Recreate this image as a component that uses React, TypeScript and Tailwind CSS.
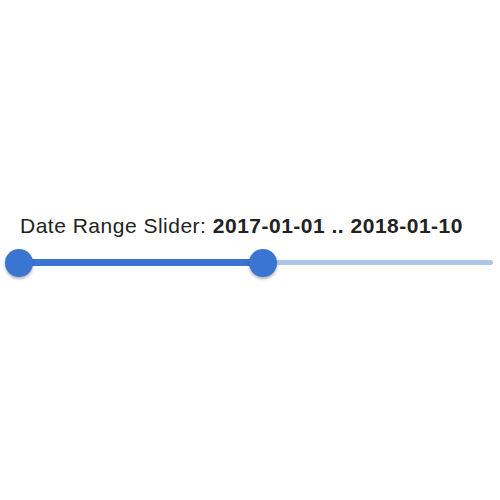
import React from "react";

const MIN = 0;
const MAX = 100;

const RangeSlider = ({ low, high }: { low: number; high: number }) => {
  const pct = (v: number) => ((v - MIN) / (MAX - MIN)) * 100;
  return (
    <div className="relative h-[28px] mx-[19px]">
      {/* rail */}
      <div className="absolute top-[11px] left-[-11px] right-[-12px] h-[5px] rounded-full bg-[#adc6ec]" />
      {/* selected range */}
      <div
        className="absolute top-[10px] h-[7px] bg-[#3a75d2]"
        style={{ left: `${pct(low)}%`, width: `${pct(high) - pct(low)}%` }}
      />
      {[low, high].map((v, i) => (
        <div
          key={i}
          className="absolute top-0 w-[28px] h-[28px] -ml-[14px] rounded-full bg-[#3a75d2] shadow-[0_2px_3px_rgba(0,0,0,0.3)]"
          style={{ left: `${pct(v)}%` }}
        />
      ))}
    </div>
  );
};

const App = () => {
  return (
    <div className="w-[500px] h-[500px] bg-white pt-[214px] font-['Liberation_Sans',Arial,sans-serif] text-[#222]">
      <p className="px-5 text-[21px] leading-[24px] tracking-[0.5px]">
        Date Range Slider: <span className="font-bold">2017-01-01 .. 2018-01-10</span>
      </p>
      <div className="mt-[11px]">
        <RangeSlider low={0} high={52.8} />
      </div>
    </div>
  );
};

export default App;
